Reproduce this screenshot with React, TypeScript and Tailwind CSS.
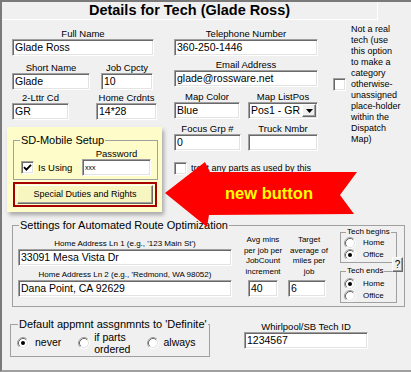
import React from 'react';

const sunken =
  'bg-white border border-t-[#a0a0a0] border-l-[#a0a0a0] border-b-white border-r-white shadow-[inset_1px_1px_0_#696969,inset_-1px_-1px_0_#e3e3e3]';
const raised =
  'border border-t-white border-l-white border-b-[#696969] border-r-[#696969] shadow-[inset_-1px_-1px_0_#a0a0a0]';

function TextBox({ value, className = '', textClass = 'text-[10.5px]' }: { value: string; className?: string; textClass?: string }) {
  return (
    <div className={`${className} h-[17px] ${sunken} pl-[2px] leading-[15px] whitespace-nowrap overflow-hidden ${textClass}`}>
      {value}
    </div>
  );
}

function Combo({ value, className = '' }: { value: string; className?: string }) {
  return (
    <div className={`${className} h-[17px] ${sunken} flex`}>
      <span className="flex-1 pl-[2px] text-[10.5px] leading-[15px] whitespace-nowrap overflow-hidden">{value}</span>
      <div className={`w-[14px] m-[1px] bg-[#f0f0f0] ${raised} flex items-center justify-center`}>
        <svg width="7" height="4" viewBox="0 0 7 4">
          <polygon points="0,0 7,0 3.5,4" fill="#000" />
        </svg>
      </div>
    </div>
  );
}

// label centred over its input, like the VB form
function Field({ label, children }: { label: string; children: React.ReactNode }) {
  return (
    <div className="flex flex-col items-center">
      <span className="text-[9.5px] leading-[11px] whitespace-nowrap">{label}</span>
      {children}
    </div>
  );
}

function CheckBox({ checked = false }: { checked?: boolean }) {
  return (
    <div className={`w-[13px] h-[13px] shrink-0 ${sunken} flex items-center justify-center`}>
      {checked && (
        <svg width="9" height="9" viewBox="0 0 9 9">
          <path d="M1 4.2 L3.4 6.6 L8 1.8" fill="none" stroke="#000" strokeWidth="1.9" />
        </svg>
      )}
    </div>
  );
}

function Radio({ checked = false }: { checked?: boolean }) {
  return (
    <svg width="12" height="12" viewBox="0 0 12 12" className="shrink-0">
      <circle cx="6" cy="6" r="4.5" fill="#fff" />
      <path d="M2.11 9.89A5.5 5.5 0 0 1 9.89 2.11" fill="none" stroke="#a0a0a0" />
      <path d="M9.89 2.11A5.5 5.5 0 0 1 2.11 9.89" fill="none" stroke="#fff" />
      <path d="M2.82 9.18A4.5 4.5 0 0 1 9.18 2.82" fill="none" stroke="#696969" />
      <path d="M9.18 2.82A4.5 4.5 0 0 1 2.82 9.18" fill="none" stroke="#e3e3e3" />
      {checked && <circle cx="6" cy="6" r="2" fill="#000" />}
    </svg>
  );
}

function RadioRow({ label, checked = false }: { label: string; checked?: boolean }) {
  return (
    <div className="h-[12px] flex items-center">
      <div className="ml-[3px]">
        <Radio checked={checked} />
      </div>
      <span className="ml-[7px] text-[8px] leading-[10px]">{label}</span>
    </div>
  );
}

const SdMobile = () => (
  <div className="mt-[7px] w-[155px] bg-[#fefcc8] pt-[7px] pb-[5px] pl-[6px] shadow-[2px_3px_4px_rgba(0,0,0,0.3)]">
    <fieldset className="w-[145px] border border-[#a0a0a0] pb-[3px]">
      <legend className="ml-[6px] px-[1px] text-[11px] leading-[13px]">SD-Mobile Setup</legend>
      <div className="flex items-end justify-between pr-[6px]">
        <div className="ml-[7px] mb-[2px] flex items-center gap-[4px]">
          <CheckBox checked />
          <span className="text-[9.5px] leading-[13px]">Is Using</span>
        </div>
        <div className="mt-[1px]">
          <Field label="Password">
            <TextBox value="xxx" className="w-[69px]" textClass="text-[7px]" />
          </Field>
        </div>
      </div>
    </fieldset>
    <div className="mt-[2px] w-[144px] h-[25px] border-2 border-[#a80000] px-[2px] py-[1px]">
      <div className={`h-full bg-[#f8f6c0] ${raised} flex items-center justify-center text-[9px]`}>
        Special Duties and Rights
      </div>
    </div>
  </div>
);

export default function App() {
  return (
    <div className="relative w-[411px] h-[372px] overflow-hidden font-['Liberation_Sans',Arial,sans-serif] text-black">
      <div className="w-full h-full bg-[#f0f0f0] border-l-2 border-t-2 border-b-2 border-l-[#7a7a7a] border-t-[#7a7a7a] border-b-[#a0a0a0]">
        {/* title */}
        <div className="w-[376px] h-[18px] border-b border-r border-white flex items-center justify-center text-[14.5px] font-bold leading-none">
          Details for Tech (Glade Ross)
        </div>

        <div className="flex items-start">
          {/* left column */}
          <div className="ml-[5px] w-[155px] flex flex-col">
            <div className="ml-[5px] mt-[8px] self-start">
              <Field label="Full Name">
                <TextBox value="Glade Ross" className="w-[142px]" />
              </Field>
            </div>
            <div className="ml-[5px] mt-[6px] flex gap-[11px]">
              <Field label="Short Name">
                <TextBox value="Glade" className="w-[78px]" />
              </Field>
              <Field label="Job Cpcty">
                <TextBox value="10" className="w-[52px]" />
              </Field>
            </div>
            <div className="ml-[5px] mt-[2px] flex gap-[27px]">
              <Field label="2-Lttr Cd">
                <TextBox value="GR" className="w-[57px]" />
              </Field>
              <Field label="Home Crdnts">
                <TextBox value="14*28" className="w-[61px]" />
              </Field>
            </div>
            <SdMobile />
          </div>

          {/* middle column */}
          <div className="ml-[12px] w-[144px] flex flex-col">
            <div className="mt-[8px]">
              <Field label="Telephone Number">
                <TextBox value="360-250-1446" className="w-[144px]" />
              </Field>
            </div>
            <div className="mt-[3px]">
              <Field label="Email Address">
                <TextBox value="glade@rossware.net" className="w-[144px]" />
              </Field>
            </div>
            <div className="mt-[4px] flex gap-[8px]">
              <Field label="Map Color">
                <TextBox value="Blue" className="w-[66px]" />
              </Field>
              <Field label="Map ListPos">
                <Combo value="Pos1 - GR" className="w-[70px]" />
              </Field>
            </div>
            <div className="mt-[4px] flex gap-[7px]">
              <Field label="Focus Grp #">
                <TextBox value="0" className="w-[67px]" />
              </Field>
              <Field label="Truck Nmbr">
                <TextBox value="" className="w-[70px]" />
              </Field>
            </div>
            <div className="mt-[11px] flex items-start gap-[4px]">
              <CheckBox />
              <span className="text-[9px] leading-[12px] whitespace-nowrap">
                treat any parts as used by this
                <br />
                tech as having come from stock (?)
              </span>
            </div>
          </div>

          {/* right column */}
          <div className="ml-[15px] mt-[4px] flex items-center">
            <CheckBox />
            <p className="ml-[5px] text-[9px] leading-[11px] whitespace-nowrap">
              Not a real
              <br />
              tech (use
              <br />
              this option
              <br />
              to make a
              <br />
              category
              <br />
              otherwise-
              <br />
              unassigned
              <br />
              place-holder
              <br />
              within the
              <br />
              Dispatch
              <br />
              Map)
            </p>
          </div>
        </div>

        {/* route optimization */}
        <fieldset className="ml-[10px] mt-[7px] w-[393px] h-[88px] border border-[#a0a0a0]">
          <legend className="ml-[6px] px-[1px] text-[11px] leading-[13px]">Settings for Automated Route Optimization</legend>
          <div className="flex items-start">
            <div className="ml-[5px] mt-[7px] w-[214px] flex flex-col items-center">
              <span className="text-[8px] leading-[10px] whitespace-nowrap">Home Address Ln 1 (e.g., '123 Main St')</span>
              <TextBox value="33091 Mesa Vista Dr" className="w-[214px]" />
              <span className="mt-[4px] text-[8px] leading-[10px] whitespace-nowrap">Home Address Ln 2 (e.g., 'Redmond, WA 98052)</span>
              <TextBox value="Dana Point, CA 92629" className="w-[214px]" />
            </div>
            <div className="ml-[10px] mt-[3px] w-[42px] flex flex-col items-center">
              <span className="text-[8px] leading-[10.5px] text-center whitespace-nowrap">
                Avg mins
                <br />
                per job per
                <br />
                JobCount
                <br />
                increment
              </span>
              <TextBox value="40" className="mt-[3px] w-[30px]" />
            </div>
            <div className="ml-[3px] mt-[3px] w-[44px] flex flex-col items-center">
              <span className="text-[8px] leading-[10.5px] text-center whitespace-nowrap">
                Target
                <br />
                average of
                <br />
                miles per
                <br />
                job
              </span>
              <TextBox value="6" className="mt-[3px] w-[38px] self-start ml-[1px]" />
            </div>
            <div className="ml-[9px] mt-[-5px] w-[57px] flex flex-col">
              <fieldset className="w-[57px] border border-[#a0a0a0] pb-[1px]">
                <legend className="ml-[5px] px-[1px] text-[8px] leading-[10px]">Tech begins</legend>
                <RadioRow label="Home" />
                <RadioRow label="Office" checked />
              </fieldset>
              <fieldset className="mt-[3px] w-[57px] border border-[#a0a0a0]">
                <legend className="ml-[5px] px-[1px] text-[8px] leading-[10px]">Tech ends</legend>
                <div className="mt-[2px]">
                  <RadioRow label="Home" checked />
                  <RadioRow label="Office" />
                </div>
              </fieldset>
            </div>
          </div>
        </fieldset>

        {/* bottom row */}
        <div className="mt-[11px] flex items-start">
          <fieldset className="ml-[8px] w-[200px] border border-[#a0a0a0] pb-[1px]">
            <legend className="ml-[7px] px-[1px] text-[11px] leading-[13px]">Default appmnt assgnmnts to 'Definite'</legend>
            <div className="h-[24px] flex items-center text-[10.5px]">
              <div className="ml-[6px]">
                <Radio checked />
              </div>
              <span className="ml-[6px]">never</span>
              <div className="ml-[17px]">
                <Radio />
              </div>
              <span className="ml-[4px] leading-[12px]">
                if parts
                <br />
                ordered
              </span>
              <div className="ml-[17px]">
                <Radio />
              </div>
              <span className="ml-[4px]">always</span>
            </div>
          </fieldset>
          <div className="ml-[34px] mt-[3px]">
            <Field label="Whirlpool/SB Tech ID">
              <TextBox value="1234567" className="w-[124px]" />
            </Field>
          </div>
        </div>
      </div>

      {/* help button sits across the frame edges */}
      <div className={`absolute left-[392px] top-[257px] w-[11px] h-[15px] bg-[#f0f0f0] ${raised} flex items-center justify-center text-[10px] leading-none`}>
        ?
      </div>

      {/* callout arrow */}
      <svg className="absolute left-0 top-0 pointer-events-none" width="411" height="372" viewBox="0 0 411 372">
        <polygon points="165,193 205,162 210,172 357,172 340,195 354,214 209,215 207,227" fill="#ff0000" />
      </svg>
      <span className="absolute left-[225px] top-[182px] text-[16.5px] leading-[22px] font-bold text-[#ffff00] whitespace-nowrap">
        new button
      </span>
    </div>
  );
}
